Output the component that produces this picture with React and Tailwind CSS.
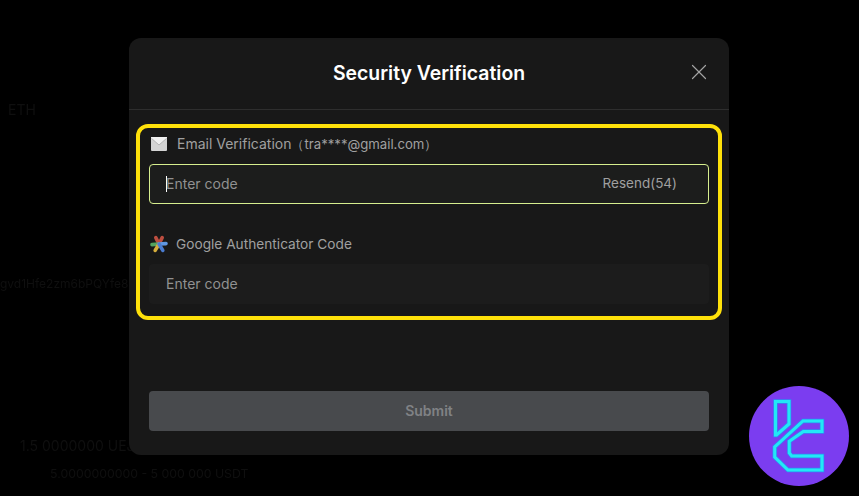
import { X } from 'lucide-react';

const FONT = "font-['Inter',sans-serif]";

// trazos del logo, se dibujan dos veces para el borde azul
const LOGO_PATHS = [
  'M26.5 15.5 H40 V38 L27.5 49 H26.5 Z',
  'M73 35 V45.5 H54.3 L40.3 55.3 V67 L42.7 70 H73 V84 H39 L25.7 71 V61 L54 35 Z',
];

function MailIcon() {
  return (
    <svg width="16" height="14" viewBox="0 0 16 14" className="shrink-0">
      <rect x="0" y="0" width="16" height="14" rx="1" fill="#d4d4d4" />
      <path d="M0 1 L8 8 L16 1 V0 H0 Z" fill="#f0f0f0" />
      <path d="M0.5 1.4 L8 8 L15.5 1.4" fill="none" stroke="#a8a8a8" strokeWidth="0.8" />
    </svg>
  );
}

function AuthIcon() {
  return (
    <svg width="18" height="18" viewBox="0 0 18 18" className="shrink-0" strokeWidth="3.6" strokeLinecap="round">
      <path d="M9 9 L5.8 2.6" stroke="#bd4e40" />
      <path d="M9 9 L12.2 2.6" stroke="#bd4e40" />
      <path d="M9 9 L2 9.6" stroke="#53a35f" />
      <path d="M9 9 L16 8.6" stroke="#5f97e2" />
      <path d="M9 9 L5.2 15.4" stroke="#d6ae3c" />
      <path d="M9 9 L12.8 15.4" stroke="#4a7cd0" />
    </svg>
  );
}

function BrandBadge() {
  return (
    <svg width="100" height="100" viewBox="0 0 100 100" className="absolute left-[749px] top-[386px]">
      <circle cx="50" cy="50" r="50" fill="#7b3df0" />
      <g fill="none" stroke="#2b8ff2" strokeWidth="4.4">
        {LOGO_PATHS.map((d) => (
          <path key={d} d={d} />
        ))}
      </g>
      <g fill="none" stroke="#22e8f6" strokeWidth="3">
        {LOGO_PATHS.map((d) => (
          <path key={d} d={d} />
        ))}
      </g>
    </svg>
  );
}

function CodeField({ focused, children }) {
  return (
    <div
      className={`flex h-10 items-center rounded-[4px] border px-4 text-sm ${
        focused ? 'border-[#d6ee8e] bg-[#1c1d1c]' : 'border-transparent bg-[#1c1c1c]'
      }`}
    >
      {focused && <span className="-mr-px h-4 w-px bg-white" />}
      <span className="text-[#919191]">Enter code</span>
      {children}
    </div>
  );
}

export default function App() {
  return (
    <div className={`relative h-[496px] w-[859px] overflow-hidden bg-black ${FONT}`}>
      {/* página oscurecida detrás del modal */}
      <p className="absolute left-2 top-[100px] text-sm text-[#0f0f0f] blur-[0.4px]">ETH</p>
      <p className="absolute left-0 top-[276px] w-[129px] truncate text-xs text-[#0f0f0f] blur-[0.4px]">gvd1Hfe2zm6bPQYfe8</p>
      <p className="absolute left-5 top-[436px] text-sm text-[#0f0f0f] blur-[0.4px]">1.5 0000000 UEJ</p>
      <p className="absolute left-[50px] top-[465px] text-[12.3px] text-[#0f0f0f] blur-[0.4px]">5.0000000000 - 5 000 000 USDT</p>

      <div className="absolute left-[129px] top-[38px] flex h-[417px] w-[600px] flex-col rounded-xl bg-[#181818]">
        <header className="relative flex h-[72px] shrink-0 items-center justify-center border-b border-[#2e2e2e]">
          <h2 className="text-[19.4px] font-semibold text-white">Security Verification</h2>
          <X className="absolute right-[17px] top-[21px] h-[26px] w-[26px] text-[#a3a3a3]" strokeWidth={1.1} />
        </header>

        <div className="mx-[7px] mt-[14px] flex h-[196px] flex-col rounded-xl border-4 border-[#ffe10a] px-[9px] pt-[6px]">
          <div className="flex h-[20px] items-center gap-[10px] pl-[2px] text-sm text-[#a0a0a0]">
            <MailIcon />
            <span>
              Email Verification<span className="text-[13.2px]">（tra****@gmail.com）</span>
            </span>
          </div>
          <div className="mt-[10px]">
            <CodeField focused>
              <span className="ml-auto mr-[15px] text-[13.5px] text-[#a0a0a0]">Resend(54)</span>
            </CodeField>
          </div>
          <div className="mt-[30px] flex h-[20px] items-center gap-[8px] pl-px text-[13.7px] text-[#a0a0a0]">
            <AuthIcon />
            <span>Google Authenticator Code</span>
          </div>
          <div className="mt-[10px]">
            <CodeField />
          </div>
        </div>

        <div className="mx-5 mt-[71px]">
          <button className="h-10 w-full rounded-[4px] bg-[#484a4d] text-sm font-semibold text-[#808285]">Submit</button>
        </div>
      </div>

      <BrandBadge />
    </div>
  );
}
